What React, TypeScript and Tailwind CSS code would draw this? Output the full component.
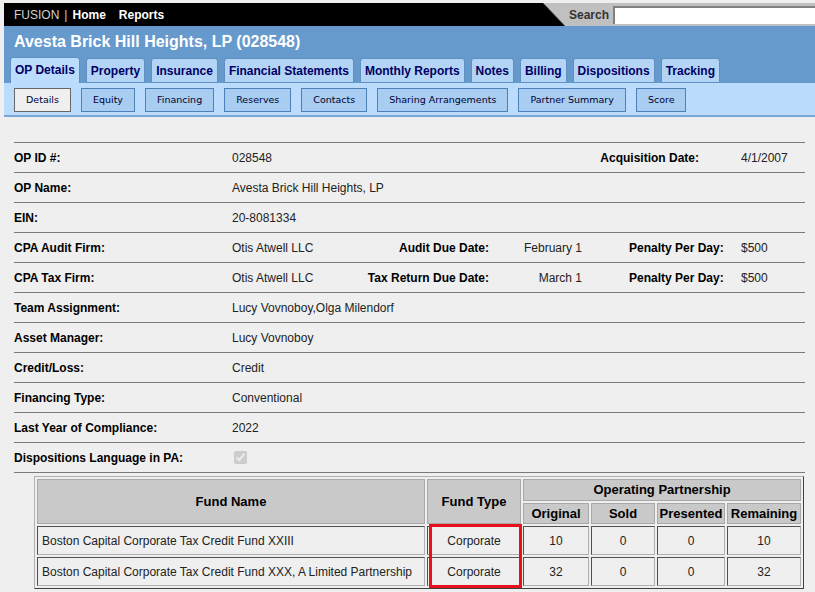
import React from 'react'

const TABS = [
  'OP Details',
  'Property',
  'Insurance',
  'Financial Statements',
  'Monthly Reports',
  'Notes',
  'Billing',
  'Dispositions',
  'Tracking',
]

const SUBTABS = [
  'Details',
  'Equity',
  'Financing',
  'Reserves',
  'Contacts',
  'Sharing Arrangements',
  'Partner Summary',
  'Score',
]

const SIMPLE_ROWS: [string, string][] = [
  ['Team Assignment:', 'Lucy Vovnoboy,Olga Milendorf'],
  ['Asset Manager:', 'Lucy Vovnoboy'],
  ['Credit/Loss:', 'Credit'],
  ['Financing Type:', 'Conventional'],
  ['Last Year of Compliance:', '2022'],
]

const FUNDS = [
  { name: 'Boston Capital Corporate Tax Credit Fund XXIII', type: 'Corporate', original: 10, sold: 0, presented: 0, remaining: 10 },
  { name: 'Boston Capital Corporate Tax Credit Fund XXX, A Limited Partnership', type: 'Corporate', original: 32, sold: 0, presented: 0, remaining: 32 },
]

function Row({ label, children }: { label: string; children?: React.ReactNode }) {
  return (
    <div className="flex h-[30px] items-center border-b border-[#7a7a7a]">
      <div className="w-[218px] shrink-0 font-bold text-black">{label}</div>
      {children}
    </div>
  )
}

function CpaRow({ label, value, dueLabel, due }: { label: string; value: string; dueLabel: string; due: string }) {
  return (
    <Row label={label}>
      <div className="w-[130px] shrink-0">{value}</div>
      <div className="w-[127px] shrink-0 text-right font-bold text-black">{dueLabel}</div>
      <div className="w-[93px] shrink-0 text-right">{due}</div>
      <div className="w-[159px] shrink-0 pl-[47px] font-bold text-black">Penalty Per Day:</div>
      <div className="flex-1">$500</div>
    </Row>
  )
}

export default function App() {
  const head = 'border border-[#a8a8a8] bg-[#c9c9c9] font-bold text-[13px] text-black p-0'
  const cell = 'border-t border-l border-[#505050] border-r-[#b0b0b0] border-b-[#b0b0b0] border-r border-b h-[29px] p-0'

  return (
    <div className="min-h-[592px] w-[815px] overflow-hidden bg-[#efefef] pt-[3px] pl-[4px] font-['Liberation_Sans',Arial,sans-serif] text-[12px]">
      {/* top bar */}
      <div className="flex h-[23px]">
        <div className="flex flex-1 items-center bg-black pl-[10px] text-[12px]">
          <span className="text-[#d0d0d0]">FUSION</span>
          <span className="mx-[5px] text-[#d0d0d0]">|</span>
          <span className="font-bold text-white">Home</span>
          <span className="ml-[13px] font-bold text-white">Reports</span>
        </div>
        <svg width="22" height="23" className="block shrink-0">
          <rect width="22" height="23" fill="#c0c0c0" />
          <polygon points="0,0 0,23 22,23" fill="#000" />
          <line x1="0" y1="0" x2="22" y2="23" stroke="#555" strokeWidth="1" />
        </svg>
        <div className="flex w-[250px] shrink-0 items-center bg-[#c0c0c0] pl-[4px]">
          <span className="text-[12px] font-bold text-[#333]">Search</span>
          <div className="ml-[4px] h-[18px] flex-1 border-t-2 border-l-2 border-t-[#808080] border-l-[#808080] bg-white" />
        </div>
      </div>

      {/* blue header */}
      <div className="bg-[#6699cc]">
        <div className="flex h-[31px] items-center pl-[10px] text-[16px] font-bold text-white">
          Avesta Brick Hill Heights, LP (028548)
        </div>
        <div className="flex items-end gap-[6px] pl-[6px]">
          {TABS.map((t, i) => (
            <div
              key={t}
              className={
                i === 0
                  ? 'flex h-[26px] items-center rounded-t-[3px] border border-b-0 border-[#5f8fc3] bg-[#bbdcfc] px-[4px] pb-[1px] font-bold text-[#000066]'
                  : 'flex h-[25px] items-center rounded-t-[3px] border border-[#5f8fc3] bg-[#b3d4f4] px-[4px] font-bold text-[#000066]'
              }
            >
              {t}
            </div>
          ))}
        </div>
      </div>

      {/* sub tabs */}
      <div className="flex h-[34px] items-center gap-[10px] border-b-2 border-[#7ba6d8] bg-[#bbdcfc] pt-[1px] pl-[10px] font-['DejaVu_Sans',Verdana,sans-serif] text-[9.5px] text-[#000033]">
        {SUBTABS.map((s, i) => (
          <div
            key={s}
            className={
              i === 0
                ? 'flex h-[24px] items-center border border-[#666] bg-[#efefef] px-[11px] pt-[1px]'
                : 'flex h-[24px] items-center border border-[#4d7fb8] bg-[#a9cdf0] px-[11px] pt-[1px]'
            }
          >
            {s}
          </div>
        ))}
      </div>

      {/* details */}
      <div className="pr-[10px] pl-[10px] pt-[25px] text-[#222]">
        <div className="border-t border-[#7a7a7a]">
          <Row label="OP ID #:">
            <div className="flex-1">028548</div>
            <div className="font-bold text-black">Acquisition Date:</div>
            <div className="ml-[42px] w-[64px]">4/1/2007</div>
          </Row>
          <Row label="OP Name:">
            <div>Avesta Brick Hill Heights, LP</div>
          </Row>
          <Row label="EIN:">
            <div>20-8081334</div>
          </Row>
          <CpaRow label="CPA Audit Firm:" value="Otis Atwell LLC" dueLabel="Audit Due Date:" due="February 1" />
          <CpaRow label="CPA Tax Firm:" value="Otis Atwell LLC" dueLabel="Tax Return Due Date:" due="March 1" />
          {SIMPLE_ROWS.map(([l, v]) => (
            <Row key={l} label={l}>
              <div>{v}</div>
            </Row>
          ))}
          <Row label="Dispositions Language in PA:">
            <input type="checkbox" checked disabled readOnly className="m-0 ml-[2px] h-[13px] w-[13px] accent-[#999]" />
          </Row>
        </div>

        {/* funds table */}
        <div className="relative mt-[3px] ml-[20px] w-[770px]">
          <table className="w-full table-fixed border-separate border-spacing-[2px] border border-t-[#b0b0b0] border-l-[#b0b0b0] border-r-[#404040] border-b-[#404040] text-center text-[12px] text-[#222]">
            <colgroup>
              <col className="w-[388px]" />
              <col className="w-[94px]" />
              <col className="w-[66px]" />
              <col className="w-[64px]" />
              <col className="w-[68px]" />
              <col />
            </colgroup>
            <thead>
              <tr>
                <th rowSpan={2} className={head}>Fund Name</th>
                <th rowSpan={2} className={head}>Fund Type</th>
                <th colSpan={4} className={head + ' h-[19px]'}>Operating Partnership</th>
              </tr>
              <tr>
                <th className={head + ' h-[18px]'}>Original</th>
                <th className={head}>Sold</th>
                <th className={head}>Presented</th>
                <th className={head}>Remaining</th>
              </tr>
            </thead>
            <tbody>
              {FUNDS.map((f) => (
                <tr key={f.name}>
                  <td className={cell + ' pl-[4px] text-left'}>{f.name}</td>
                  <td className={cell}>{f.type}</td>
                  <td className={cell}>{f.original}</td>
                  <td className={cell}>{f.sold}</td>
                  <td className={cell}>{f.presented}</td>
                  <td className={cell}>{f.remaining}</td>
                </tr>
              ))}
            </tbody>
          </table>
          {/* annotation box */}
          <div className="pointer-events-none absolute top-[48px] left-[395px] h-[64px] w-[93px] border-[3px] border-[#e8101a]" />
        </div>
      </div>
    </div>
  )
}
